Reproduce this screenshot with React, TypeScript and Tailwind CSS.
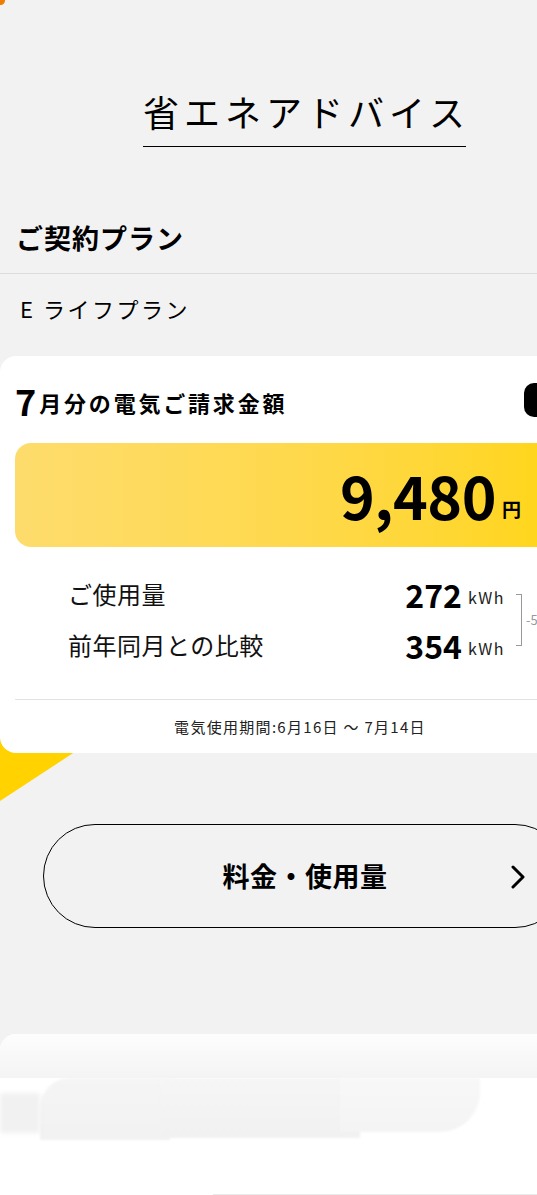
import React from "react";

const font = { fontFamily: '"Noto Sans CJK JP", "Noto Sans", sans-serif' };

const UsageRow = ({ label, value }: { label: string; value: string }) => (
  <div className="flex items-center h-[51px]">
    <span className="text-[24px] tracking-[0.5px] text-[#111] flex-1">{label}</span>
    <span className="text-[32px] font-bold leading-none text-black">{value}</span>
    <span className="ml-[6px] mt-[6px] text-[16px] tracking-[1.5px] text-[#222]">kWh</span>
  </div>
);

export default function App() {
  return (
    <div className="relative min-h-[1195px] w-full overflow-hidden bg-[#f2f2f2] text-black" style={font}>
      {/* cut-off logo corner */}
      <div className="absolute -left-[4px] -top-[4px] h-[9px] w-[9px] rounded-full bg-[#ef7d00]" />

      {/* Page title */}
      <div className="pt-[83px] pl-[143px]">
        <h1 className="w-[323px] border-b border-black pb-[7px] text-[36px] font-normal leading-[56px] tracking-[5px] whitespace-nowrap">
          省エネアドバイス
        </h1>
      </div>

      {/* Contract plan */}
      <h2 className="mt-[71px] px-[16px] text-[27px] font-bold leading-[40px] tracking-[1px]">ご契約プラン</h2>
      <div className="mt-[15px] border-t border-[#dcdcdc]" />
      <p className="px-[20px] pt-[18px] text-[22px] leading-[32px] tracking-[2.5px]">E ライフプラン</p>

      {/* Bill card */}
      <div className="relative mt-[32px]">
        <svg className="absolute left-0 top-[370px]" width="100" height="80" viewBox="0 0 100 80">
          <polygon points="0,0 90,16 0,75" fill="#ffd200" />
        </svg>
        <div className="relative w-[600px] rounded-l-[16px] bg-white px-[15px] pt-[22px] pb-[15px]">
          <div className="flex items-center h-[44px]">
            <span className="text-[36px] font-bold leading-none mr-[3px]">7</span>
            <span className="text-[22px] font-bold tracking-[2.8px] mt-[4px]">月分の電気ご請求金額</span>
            <div className="ml-auto mr-[-15px] h-[34px] w-[76px] rounded-l-[10px] bg-black" />
          </div>

          <div className="mt-[21px] flex h-[104px] items-center justify-end rounded-l-[16px] bg-gradient-to-r from-[#fedc6c] to-[#ffd500] pr-[64px]">
            <span className="text-[59px] font-bold leading-none tracking-[-0.5px] mt-[-2px]">9,480</span>
            <span className="ml-[6px] mt-[28px] text-[19px] font-bold">円</span>
          </div>

          <div className="mt-[21px] flex">
            <div className="w-[490px] pl-[53px]">
              <UsageRow label="ご使用量" value="272" />
              <UsageRow label="前年同月との比較" value="354" />
            </div>
            <div className="ml-[11px] mt-[26px] flex items-center self-start">
              <div className="h-[52px] w-[6px] border-y border-r border-[#999]" />
              <span className="ml-[4px] text-[13px] text-[#999]">-5</span>
            </div>
          </div>

          <div className="mt-[29px] border-t border-[#e2e2e2]" />
          <p className="pt-[16px] text-center text-[15px] leading-[22px] text-[#222] tracking-[1.3px]">
            電気使用期間:6月16日 〜 7月14日
          </p>
        </div>
      </div>

      {/* Fee / usage button */}
      <div className="mt-[71px] pl-[43px]">
        <button className="relative flex h-[104px] w-[524px] items-center justify-center rounded-full border border-black">
          <span className="text-[27px] font-bold tracking-[0.5px]" style={font}>料金・使用量</span>
          <svg className="absolute left-[466px] top-[40px]" width="16" height="24" viewBox="0 0 16 24">
            <path d="M3 2 L13 12 L3 22" fill="none" stroke="#000" strokeWidth="3" strokeLinecap="round" strokeLinejoin="round" />
          </svg>
        </button>
      </div>

      {/* Faded card below */}
      <div className="mt-[106px] h-[170px] w-[560px] overflow-hidden rounded-tl-[16px] bg-white">
        <div className="h-[44px] bg-gradient-to-b from-[#fdfdfd] to-[#f4f4f4]" />
        <div className="relative h-[126px]">
          <div className="absolute left-[40px] top-0 h-[62px] w-[130px] rounded-tl-[30px] bg-gradient-to-b from-[#f5f5f5] to-[#f2f2f2] blur-[1px]" />
          <div className="absolute left-[160px] top-0 h-[60px] w-[200px] bg-gradient-to-b from-[#f6f6f6] to-[#f1f1f1] blur-[1px]" />
          <div className="absolute left-[340px] top-0 h-[54px] w-[140px] rounded-br-[40px] bg-gradient-to-b from-[#f8f8f8] to-[#f4f4f4] blur-[1px]" />
          <div className="absolute left-0 top-[15px] h-[40px] w-[40px] bg-[#f1f1f1] blur-[2px]" />
          <div className="absolute left-[213px] top-[116px] h-px w-[330px] bg-[#eaeaea]" />
        </div>
      </div>
    </div>
  );
}
